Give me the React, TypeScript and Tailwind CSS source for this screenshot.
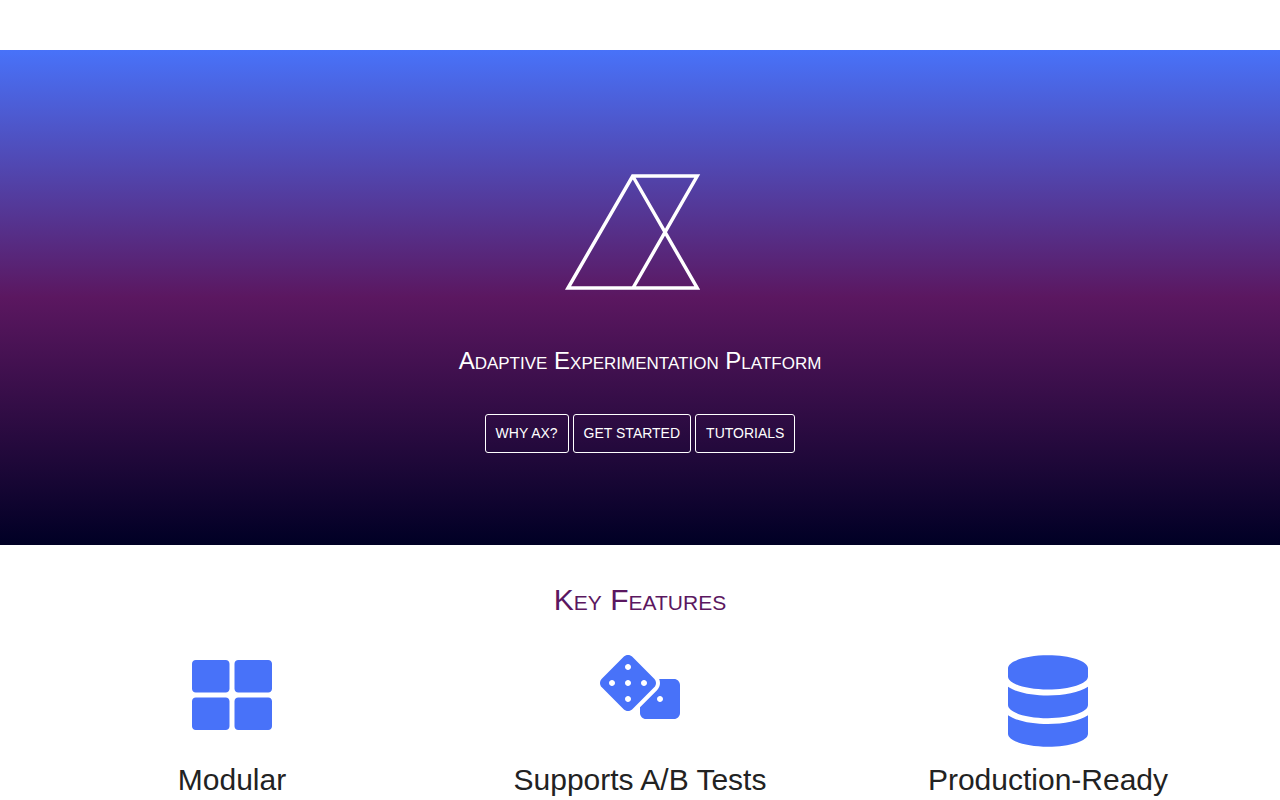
import type { IconType } from 'react-icons'
import { FaDatabase, FaDice, FaThLarge } from 'react-icons/fa'

interface Feature {
  title: string
  icon: IconType
  iconClass: string
}

const links = [
  { label: 'Why Ax?', href: '#why-ax' },
  { label: 'Get Started', href: '#get-started' },
  { label: 'Tutorials', href: '#tutorials' },
]

// The glyphs share a width, their heights differ
const features: Feature[] = [
  { title: 'Modular', icon: FaThLarge, iconClass: 'h-20 w-20' },
  { title: 'Supports A/B Tests', icon: FaDice, iconClass: 'h-16 w-20' },
  { title: 'Production-Ready', icon: FaDatabase, iconClass: 'h-[92px] w-20' },
]

function Logo() {
  return (
    <svg
      viewBox="0 0 160 120"
      className="h-[120px] w-40"
      fill="none"
      stroke="white"
      strokeWidth="3.5"
      role="img"
      aria-label="Ax"
    >
      <path d="M73 116L137.2 4H72.7L8 116H137.2L72.7 4" />
    </svg>
  )
}

function Hero() {
  return (
    <section className="flex flex-col items-center bg-[linear-gradient(to_bottom,#4872f9_0%,#5b1760_50%,#000025_100%)] px-5 pt-[122px] pb-[92px] text-white">
      <Logo />
      <h1 className="mt-[55px] text-center text-[24px] leading-[28px] [font-variant:small-caps]">
        Adaptive Experimentation Platform
      </h1>
      <nav className="mt-[39px] flex flex-wrap justify-center gap-1">
        {links.map(link => (
          <a
            key={link.href}
            href={link.href}
            className="rounded-[3px] border border-white p-[10px] text-[14px] leading-[17px] uppercase hover:bg-white hover:text-[#5b1760]"
          >
            {link.label}
          </a>
        ))}
      </nav>
    </section>
  )
}

function FeatureBlock({ title, icon: Icon, iconClass }: Feature) {
  return (
    <div className="flex flex-col items-center">
      <div className="h-[91px] text-[#4872f9]">
        <Icon className={iconClass} aria-hidden="true" />
      </div>
      <h3 className="mt-4 text-center text-[30px] leading-9 text-[#222222]">{title}</h3>
    </div>
  )
}

export default function App() {
  return (
    <div className="bg-white font-['Liberation_Sans',Arial,sans-serif]">
      <header className="h-[50px] bg-white" />
      <main>
        <Hero />
        <section className="px-7 pt-[37px]">
          <h2 className="text-center text-[30px] leading-9 text-[#5b1760] [font-variant:small-caps]">
            Key Features
          </h2>
          <div className="mt-[37px] grid grid-cols-3">
            {features.map(f => (
              <FeatureBlock key={f.title} {...f} />
            ))}
          </div>
        </section>
      </main>
    </div>
  )
}
